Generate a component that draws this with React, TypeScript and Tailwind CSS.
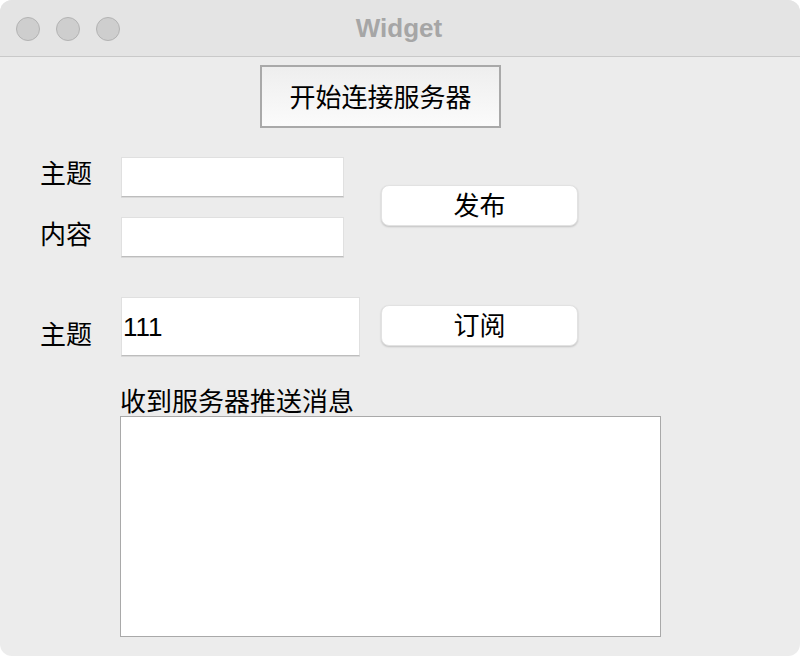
import React from 'react';

const cjk = "font-['Noto_Sans_CJK_SC','Noto_Sans',sans-serif]";

// flat mac-style line edit: white field, faint border, darker bottom edge
const Field: React.FC<{ className?: string; value?: string }> = ({ className = '', value }) => (
  <div
    className={`bg-white border border-[#e0e0e0] border-b-[#bdbdbd] shadow-[0_1px_0_rgba(0,0,0,0.08)] flex items-center ${className}`}
  >
    {value && (
      <span className="pl-[1px] text-[26px] leading-none text-black font-['Liberation_Sans',sans-serif]">{value}</span>
    )}
  </div>
);

const PushButton: React.FC<{ label: string; className?: string }> = ({ label, className = '' }) => (
  <button
    className={`w-[197px] h-[41px] pb-[4px] rounded-[8px] bg-white border border-[#e2e2e2] shadow-[0_1px_2px_rgba(0,0,0,0.18)] flex items-center justify-center text-[26px] leading-none text-black ${cjk} ${className}`}
  >
    {label}
  </button>
);

export default function App() {
  return (
    <div className="w-[800px] h-[656px] bg-white">
      <div className="w-full h-full rounded-[12px] overflow-hidden bg-[#ececec] flex flex-col">
        {/* title bar */}
        <div className="relative h-[57px] shrink-0 bg-[#e4e4e4] border-b border-[#c9c9c9] flex items-center">
          <div className="flex gap-[16px] pl-[16px] pt-[1px]">
            <span className="w-[24px] h-[24px] rounded-full bg-[#cecece] border border-[#b3b3b3]" />
            <span className="w-[24px] h-[24px] rounded-full bg-[#cecece] border border-[#b3b3b3]" />
            <span className="w-[24px] h-[24px] rounded-full bg-[#cecece] border border-[#b3b3b3]" />
          </div>
          <div className="absolute inset-0 flex items-center justify-center">
            <span className="text-[26px] font-bold text-[#a6a6a6] font-['Liberation_Sans',sans-serif] ml-[-2px]">Widget</span>
          </div>
        </div>

        {/* connect */}
        <div className="pl-[260px] pt-[8px]">
          <button
            className={`w-[241px] h-[63px] pb-[2px] border-2 border-[#a9a9a9] bg-gradient-to-b from-[#eeeeee] to-[#fbfbfb] flex items-center justify-center text-[26px] leading-none text-black ${cjk}`}
          >
            开始连接服务器
          </button>
        </div>

        {/* publish */}
        <div className="flex items-center pl-[40px] mt-[29px]">
          <div className="flex flex-col gap-[20px]">
            <div className="flex items-center">
              <span className={`w-[81px] pb-[10px] text-[26px] leading-none text-black ${cjk}`}>主题</span>
              <Field className="w-[223px] h-[40px]" />
            </div>
            <div className="flex items-center">
              <span className={`w-[81px] pb-[8px] text-[26px] leading-none text-black ${cjk}`}>内容</span>
              <Field className="w-[223px] h-[40px]" />
            </div>
          </div>
          <PushButton label="发布" className="ml-[37px] mt-[-3px]" />
        </div>

        {/* subscribe */}
        <div className="flex items-center pl-[40px] mt-[40px]">
          <span className={`w-[81px] pt-[12px] text-[26px] leading-none text-black ${cjk}`}>主题</span>
          <Field className="w-[239px] h-[59px]" value="111" />
          <PushButton label="订阅" className="ml-[21px] mt-[-2px]" />
        </div>

        {/* messages */}
        <div className="pl-[120px] mt-[29px]">
          <div className={`h-[30px] flex items-center text-[26px] leading-none text-black ${cjk}`}>收到服务器推送消息</div>
          <div className="mt-[1px] w-[541px] h-[221px] bg-white border border-[#a9a9a9]" />
        </div>
      </div>
    </div>
  );
}
